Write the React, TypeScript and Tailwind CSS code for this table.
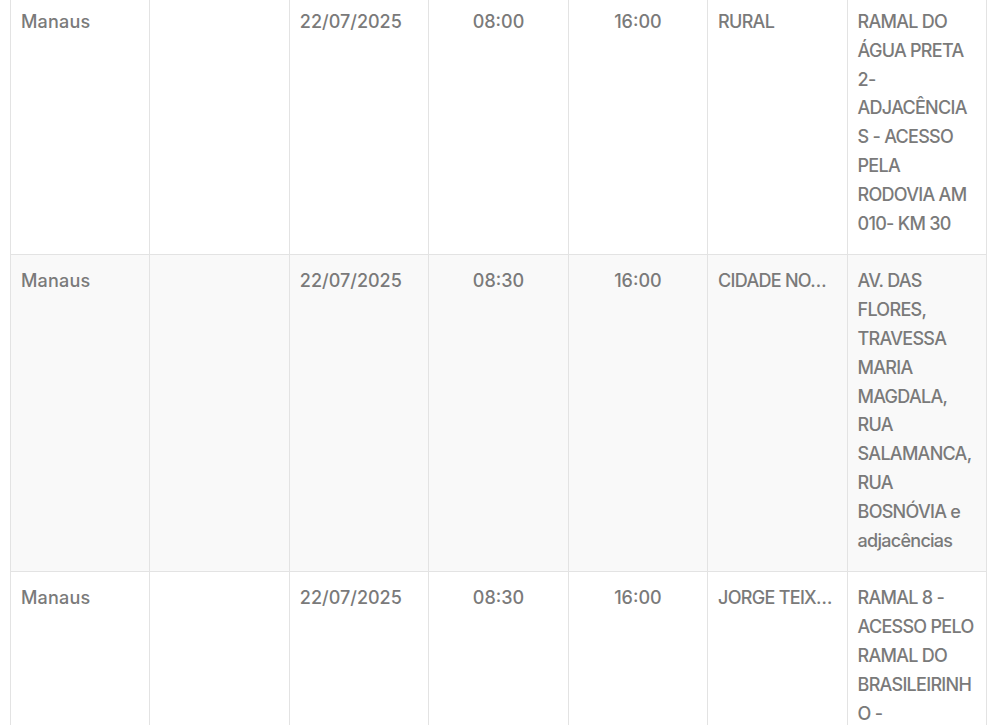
import React from "react";

type Row = {
  city: string;
  district: string;
  date: string;
  start: string;
  end: string;
  area: string;
  place: string[];
};

const rows: Row[] = [
  {
    city: "Manaus",
    district: "",
    date: "22/07/2025",
    start: "08:00",
    end: "16:00",
    area: "RURAL",
    place: [
      "RAMAL DO",
      "ÁGUA PRETA",
      "2-",
      "ADJACÊNCIA",
      "S - ACESSO",
      "PELA",
      "RODOVIA AM",
      "010- KM 30",
    ],
  },
  {
    city: "Manaus",
    district: "",
    date: "22/07/2025",
    start: "08:30",
    end: "16:00",
    area: "CIDADE NOVA",
    place: [
      "AV. DAS",
      "FLORES,",
      "TRAVESSA",
      "MARIA",
      "MAGDALA,",
      "RUA",
      "SALAMANCA,",
      "RUA",
      "BOSNÓVIA e",
      "adjacências",
    ],
  },
  {
    city: "Manaus",
    district: "",
    date: "22/07/2025",
    start: "08:30",
    end: "16:00",
    area: "JORGE TEIXEIRA",
    place: ["RAMAL 8 -", "ACESSO PELO", "RAMAL DO", "BRASILEIRINH", "O -"],
  },
];

const cell = "border border-[#e3e3e3] pl-[10px] pt-[12px] pb-[16px] align-top";

export default function App() {
  return (
    <div
      className="min-h-screen overflow-hidden bg-white px-[10px] text-[18px] leading-[1.6] font-medium text-[#7a7a7a]"
      style={{ fontFamily: "Inter, 'DejaVu Sans', sans-serif" }}
    >
      <table className="-mt-[5px] w-full table-fixed border-collapse">
        <tbody>
          {rows.map((r, i) => (
            <tr key={i} className={i % 2 === 1 ? "bg-[#f9f9f9]" : "bg-white"}>
              <td className={`${cell} pr-[10px] tracking-[0.01em]`}>{r.city}</td>
              <td className={`${cell} pr-[10px]`}>{r.district}</td>
              <td className={`${cell} pr-[10px]`}>{r.date}</td>
              <td className={`${cell} pr-[10px] text-center`}>{r.start}</td>
              <td className={`${cell} pr-[10px] text-center`}>{r.end}</td>
              <td className={`${cell} pr-[14px] truncate tracking-[-0.04em]`}>{r.area}</td>
              <td className={`${cell} pr-[10px] tracking-[-0.04em]`}>
                {r.place.map((line, j) => (
                  <span key={j} className="block whitespace-nowrap">
                    {line}
                  </span>
                ))}
              </td>
            </tr>
          ))}
        </tbody>
      </table>
    </div>
  );
}
